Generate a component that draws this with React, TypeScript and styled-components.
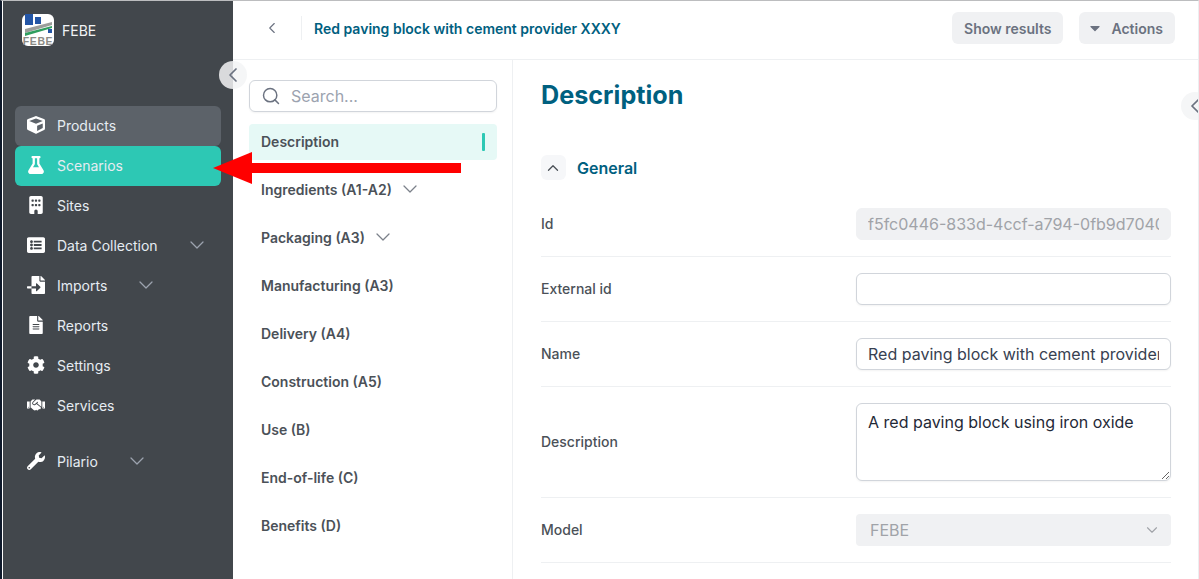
import React from 'react';
import styled, { createGlobalStyle } from 'styled-components';
import { ChevronDown, ChevronLeft, ChevronUp, Search } from 'lucide-react';
import {
  FaCaretDown,
  FaCog,
  FaCube,
  FaFileAlt,
  FaFileImport,
  FaFlask,
  FaHandshake,
  FaListAlt,
  FaWrench,
} from 'react-icons/fa';
import { FaBuilding } from 'react-icons/fa6';

const GlobalStyle = createGlobalStyle`
  html, body {
    margin: 0;
    padding: 0;
    height: 100%;
    overflow: hidden;
    background: #fff;
    font-family: Inter, "Liberation Sans", sans-serif;
  }
  * {
    box-sizing: border-box;
  }
`;

const Shell = styled.div`
  position: relative;
  display: flex;
  width: 1199px;
  height: 579px;
  overflow: hidden;
  background: #fff;
  border-top: 1px solid #bcbdbf;
  border-left: 2px solid #0f1a2b;
  border-right: 1px solid #eceef0;
  padding-left: 1px;
`;

const Sidebar = styled.aside`
  flex: 0 0 230px;
  display: flex;
  flex-direction: column;
  background: #42474c;
  padding: 13px 12px 0;
`;

const Brand = styled.div`
  display: flex;
  align-items: center;
  gap: 8px;
  height: 32px;
  padding-left: 7px;
  margin-bottom: 60px;
  font-size: 14px;
  color: #f1f3f5;
`;

const NavList = styled.nav`
  display: flex;
  flex-direction: column;
`;

const NavItem = styled.div<{ $state?: 'hover' | 'active'; $spaced?: boolean }>`
  display: flex;
  align-items: center;
  gap: 12px;
  height: 40px;
  padding: 0 12px 2px;
  margin-top: ${({ $spaced }) => ($spaced ? '16px' : '0')};
  border-radius: 6px;
  font-size: 14px;
  white-space: nowrap;
  color: #e6ecf2;
  background: ${({ $state }) =>
    $state === 'hover' ? '#5c6269' : $state === 'active' ? '#2dc8b4' : 'transparent'};

  svg.nav-icon {
    flex: 0 0 18px;
    width: 18px;
    height: 18px;
    color: #fff;
  }
`;

const NavChevron = styled(ChevronDown)`
  flex: none;
  margin-left: 15px;
  color: #9ca3af;
`;

const Main = styled.main`
  flex: 1;
  display: flex;
  flex-direction: column;
  min-width: 0;
`;

const Header = styled.header`
  flex: 0 0 59px;
  display: flex;
  align-items: center;
  padding: 0 23px 4px 30px;
  border-bottom: 1px solid #eef0f2;
`;

const BackButton = styled.div`
  display: flex;
  align-items: center;
  width: 39px;
  height: 24px;
  color: #6b7280;
  border-right: 1px solid #eef0f2;
  margin-right: 12px;
`;

const HeaderTitle = styled.div`
  flex: 1;
  font-size: 14px;
  font-weight: 600;
  color: #00607f;
`;

const ActionButton = styled.div`
  display: flex;
  align-items: center;
  gap: 10px;
  height: 32px;
  padding: 0 12px;
  margin-left: 16px;
  border-radius: 6px;
  background: #f0f1f3;
  font-size: 14px;
  font-weight: 600;
  color: #6b7280;

  svg {
    margin-left: -4px;
    margin-right: -2px;
  }
`;

const Body = styled.div`
  flex: 1;
  display: flex;
  min-height: 0;
`;

const SubNav = styled.div`
  flex: 0 0 280px;
  display: flex;
  flex-direction: column;
  gap: 12px;
  padding: 20px 15px 0 16px;
  border-right: 1px solid #eef0f2;
`;

const SearchBox = styled.div`
  display: flex;
  align-items: center;
  gap: 10px;
  height: 32px;
  padding: 0 12px 0 11px;
  border: 1px solid #d1d5db;
  border-radius: 6px;
  box-shadow: 0 1px 2px rgba(0, 0, 0, 0.05);
  font-size: 16px;
  color: #9ca3af;

  svg {
    color: #6b7280;
  }
`;

const SubNavItem = styled.div<{ $active?: boolean }>`
  display: flex;
  align-items: center;
  height: 36px;
  padding: 0 12px 2px;
  border-radius: 4px;
  font-size: 14px;
  font-weight: 600;
  color: #4b5158;
  background: ${({ $active }) => ($active ? '#e6f9f6' : 'transparent')};
`;

const ActiveMark = styled.span`
  width: 3px;
  height: 18px;
  margin-left: auto;
  margin-top: 2px;
  border-radius: 1px;
  background: #2dc8b4;
`;

const SubChevron = styled(ChevronDown)`
  margin-left: 6px;
  color: #7b818a;
`;

const Content = styled.section`
  flex: 1;
  min-width: 0;
  padding: 19px 27px 0 28px;
`;

const PageTitle = styled.h1`
  margin: 0;
  font-size: 25.2px;
  line-height: 32px;
  font-weight: 700;
  color: #00607f;
`;

const SectionHead = styled.div`
  display: flex;
  align-items: center;
  gap: 11px;
  margin-top: 44px;
  margin-bottom: 12px;
  font-size: 16px;
  font-weight: 600;
  color: #00607f;
`;

const CollapseButton = styled.div`
  display: flex;
  align-items: center;
  justify-content: center;
  width: 25px;
  height: 25px;
  padding-right: 2px;
  border-radius: 6px;
  background: #f6f7f9;
  color: #4b5158;
`;

const FormRow = styled.div`
  display: grid;
  grid-template-columns: 1fr 315px;
  align-items: center;
  padding: 16px 0;
  border-bottom: 1px solid #eef0f2;
`;

const FieldLabel = styled.label`
  margin-bottom: 2px;
  font-size: 14px;
  font-weight: 500;
  color: #4b5158;
`;

const TextInput = styled.input`
  width: 100%;
  height: 32px;
  padding: 0 11px;
  border: 1px solid #d1d5db;
  border-radius: 6px;
  outline: none;
  box-shadow: 0 1px 2px rgba(0, 0, 0, 0.05);
  font-family: inherit;
  font-size: 16px;
  color: #374151;

  &:disabled {
    border-color: #f0f1f3;
    background: #f0f1f3;
    box-shadow: none;
    color: #a0a3a8;
    opacity: 1;
  }
`;

const TextArea = styled.textarea`
  display: block;
  width: 100%;
  height: 78px;
  padding: 7px 11px;
  border: 1px solid #d1d5db;
  border-radius: 6px;
  outline: none;
  box-shadow: 0 1px 2px rgba(0, 0, 0, 0.05);
  font-family: inherit;
  font-size: 16px;
  line-height: 22px;
  color: #1f2937;
`;

const SelectBox = styled.div`
  display: flex;
  align-items: center;
  justify-content: space-between;
  height: 32px;
  padding: 0 10px 0 14px;
  border-radius: 4px;
  background: #f0f1f3;
  font-size: 16px;
  color: #a0a3a8;
`;

const RoundToggle = styled.div<{ $split?: boolean }>`
  position: absolute;
  display: flex;
  align-items: center;
  justify-content: center;
  width: 28px;
  height: 28px;
  border-radius: 50%;
  color: #6b7280;
  background: ${({ $split }) =>
    $split ? 'linear-gradient(90deg, #d9dadc 50%, #f5f6f7 50%)' : '#f5f6f7'};
`;

const SidebarToggle = styled(RoundToggle)`
  left: 217px;
  top: 60px;
`;

const ContentToggle = styled(RoundToggle)`
  left: 1179px;
  top: 91px;
`;

const Arrow = styled.svg`
  position: absolute;
  left: 208px;
  top: 149px;
`;

const navItems = [
  { label: 'Products', icon: FaCube, state: 'hover' as const },
  { label: 'Scenarios', icon: FaFlask, state: 'active' as const },
  { label: 'Sites', icon: FaBuilding },
  { label: 'Data Collection', icon: FaListAlt, chevron: true },
  { label: 'Imports', icon: FaFileImport, chevron: true },
  { label: 'Reports', icon: FaFileAlt },
  { label: 'Settings', icon: FaCog },
  { label: 'Services', icon: FaHandshake },
  { label: 'Pilario', icon: FaWrench, chevron: true, spaced: true },
];

const subNavItems = [
  { label: 'Description', active: true },
  { label: 'Ingredients (A1-A2)', chevron: true },
  { label: 'Packaging (A3)', chevron: true },
  { label: 'Manufacturing (A3)' },
  { label: 'Delivery (A4)' },
  { label: 'Construction (A5)' },
  { label: 'Use (B)' },
  { label: 'End-of-life (C)' },
  { label: 'Benefits (D)' },
];

const Logo = () => (
  <svg width="32" height="32" viewBox="0 0 32 32">
    <rect width="32" height="32" rx="6" fill="#fff" />
    <rect x="3" y="0" width="8" height="11" fill="#2456a6" />
    <rect x="13" y="3" width="6" height="7" fill="#2456a6" />
    <rect x="26" y="15" width="4" height="4" fill="#2456a6" />
    <polygon points="3,15 30,8 30,11 3,19" fill="#9b9d9b" />
    <polygon points="3,19 30,12 30,14 3,22" fill="#2f9e5f" />
    <text x="16" y="31" textAnchor="middle" fontSize="10.5" fontWeight="700" letterSpacing="0.6" fill="#8b8b86" fontFamily="'Liberation Sans', sans-serif">
      FEBE
    </text>
  </svg>
);

const App = () => {
  return (
    <Shell>
      <GlobalStyle />
      <Sidebar>
        <Brand>
          <Logo />
          FEBE
        </Brand>
        <NavList>
          {navItems.map(({ label, icon: Icon, state, chevron, spaced }) => (
            <NavItem key={label} $state={state} $spaced={spaced}>
              <Icon className="nav-icon" />
              {label}
              {chevron && <NavChevron size={24} strokeWidth={1.25} />}
            </NavItem>
          ))}
        </NavList>
      </Sidebar>
      <Main>
        <Header>
          <BackButton>
            <ChevronLeft size={18} strokeWidth={1.5} />
          </BackButton>
          <HeaderTitle>Red paving block with cement provider XXXY</HeaderTitle>
          <ActionButton>Show results</ActionButton>
          <ActionButton>
            <FaCaretDown size={16} />
            Actions
          </ActionButton>
        </Header>
        <Body>
          <SubNav>
            <SearchBox>
              <Search size={20} strokeWidth={1.75} />
              Search...
            </SearchBox>
            {subNavItems.map(({ label, active, chevron }) => (
              <SubNavItem key={label} $active={active}>
                {label}
                {chevron && <SubChevron size={24} strokeWidth={1.25} />}
                {active && <ActiveMark />}
              </SubNavItem>
            ))}
          </SubNav>
          <Content>
            <PageTitle>Description</PageTitle>
            <SectionHead>
              <CollapseButton>
                <ChevronUp size={18} strokeWidth={1.75} />
              </CollapseButton>
              General
            </SectionHead>
            <FormRow>
              <FieldLabel>Id</FieldLabel>
              <TextInput disabled value="f5fc0446-833d-4ccf-a794-0fb9d7040c1e" readOnly />
            </FormRow>
            <FormRow>
              <FieldLabel>External id</FieldLabel>
              <TextInput value="" readOnly />
            </FormRow>
            <FormRow>
              <FieldLabel>Name</FieldLabel>
              <TextInput value="Red paving block with cement provider XXXY" readOnly />
            </FormRow>
            <FormRow>
              <FieldLabel>Description</FieldLabel>
              <TextArea value="A red paving block using iron oxide" readOnly />
            </FormRow>
            <FormRow>
              <FieldLabel>Model</FieldLabel>
              <SelectBox>
                FEBE
                <ChevronDown size={18} strokeWidth={1.5} />
              </SelectBox>
            </FormRow>
          </Content>
        </Body>
      </Main>
      <SidebarToggle $split>
        <ChevronLeft size={24} strokeWidth={1.75} />
      </SidebarToggle>
      <ContentToggle>
        <ChevronLeft size={24} strokeWidth={1.75} />
      </ContentToggle>
      <Arrow width="252" height="36" viewBox="0 0 252 36">
        <polygon points="3,18 42,2 42,13 251,13 251,23 42,23 42,34" fill="#ff0000" />
      </Arrow>
    </Shell>
  );
};

export default App;
